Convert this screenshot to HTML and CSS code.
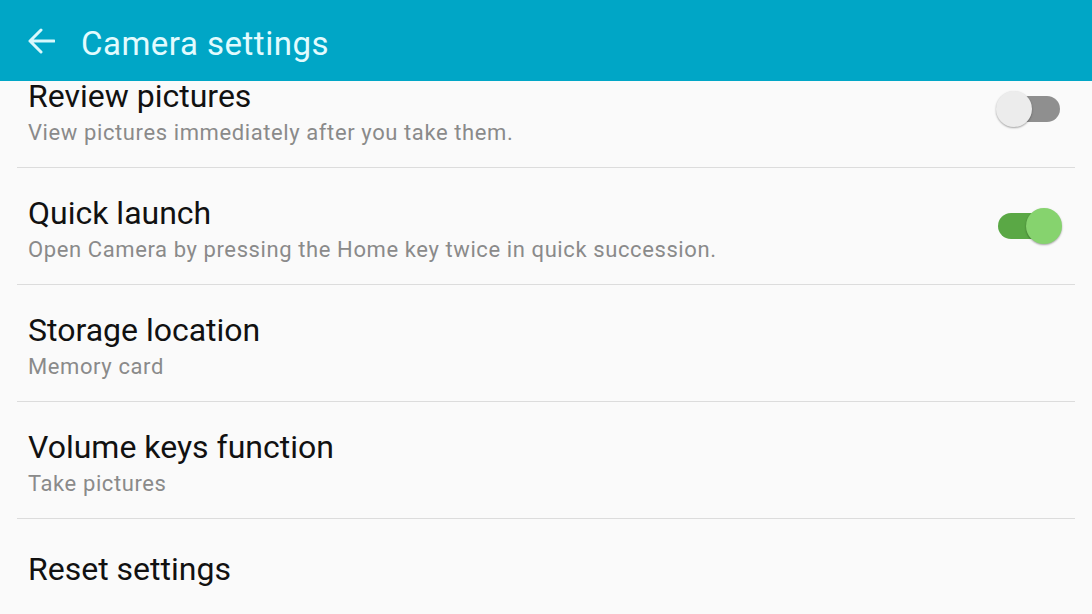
FILE: index.html
```html
<!DOCTYPE html>
<html>
<head>
<meta charset="utf-8">
<link rel="stylesheet" href="styles.css">
</head>
<body>
<header class="appbar">
  <svg class="back" width="28" height="26" viewBox="0 0 28 26">
    <path d="M27 13H3M14 2L3 13l11 11" fill="none" stroke="#d8f8fc" stroke-width="3" stroke-linecap="round" stroke-linejoin="round"/>
  </svg>
  <h1 class="title">Camera settings</h1>
</header>
<main class="list">
  <div class="row">
    <div class="text">
      <div class="primary">Review pictures</div>
      <div class="secondary">View pictures immediately after you take them.</div>
    </div>
    <div class="switch off"><span class="thumb"></span></div>
  </div>
  <div class="row">
    <div class="text">
      <div class="primary">Quick launch</div>
      <div class="secondary">Open Camera by pressing the Home key twice in quick succession.</div>
    </div>
    <div class="switch on"><span class="thumb"></span></div>
  </div>
  <div class="row">
    <div class="text">
      <div class="primary">Storage location</div>
      <div class="secondary">Memory card</div>
    </div>
  </div>
  <div class="row">
    <div class="text">
      <div class="primary">Volume keys function</div>
      <div class="secondary">Take pictures</div>
    </div>
  </div>
  <div class="row single">
    <div class="text">
      <div class="primary">Reset settings</div>
    </div>
  </div>
</main>
</body>
</html>
```
FILE: styles.css
```css
html, body {
  margin: 0;
  padding: 0;
  background: #fafafa;
  font-family: Roboto, "Noto Sans", sans-serif;
  overflow: hidden;
  height: 614px;
}
.appbar {
  position: relative;
  z-index: 2;
  height: 81px;
  background: #00a6c6;
  display: flex;
  align-items: center;
  padding-left: 27px;
  box-sizing: border-box;
}
.back {
  display: block;
  margin-top: 0;
}
.title {
  margin: 5px 0 0 26px;
  font-weight: 400;
  font-size: 33px;
  letter-spacing: 0.5px;
  color: #e2fbfe;
  line-height: 1;
}
.list {
  margin: -30px 17px 0;
  position: relative;
  z-index: 1;
}
.row {
  height: 117px;
  box-sizing: border-box;
  border-bottom: 1px solid #dcdcdc;
  display: flex;
  align-items: center;
  padding: 0 15px 0 11px;
}
.row.single {
  border-bottom: none;
  height: 100px;
}
.text {
  flex: 1;
  padding-top: 6px;
}
.row.single .text {
  padding-top: 0;
}
.primary {
  font-size: 32px;
  line-height: 36px;
  color: #111;
}
.secondary {
  font-size: 22px;
  letter-spacing: 0.6px;
  line-height: 28px;
  color: #8a8a8a;
  margin-top: 5px;
}
.switch {
  position: relative;
  width: 62px;
  height: 26px;
  border-radius: 13px;
}
.switch.off { background: #8f8f8f; }
.switch.on { background: #5aa845; }
.thumb {
  position: absolute;
  top: -5px;
  width: 36px;
  height: 36px;
  border-radius: 50%;
  box-shadow: 0 1px 2px rgba(0,0,0,0.35);
}
.switch.off .thumb { left: -2px; background: #ececec; }
.switch.on .thumb { right: -2px; background: #86d36e; }
```
